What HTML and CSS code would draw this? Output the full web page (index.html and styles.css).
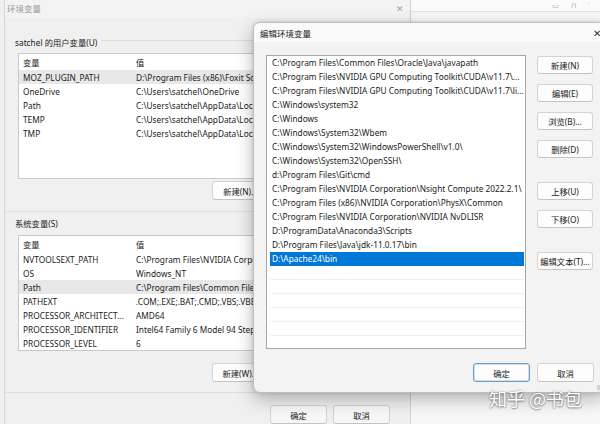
FILE: index.html
```html
<!DOCTYPE html>
<html>
<head>
<meta charset="utf-8">
<link rel="stylesheet" href="styles.css">
</head>
<body>
<div class="desk">
  <div class="backwin">
    <div class="bw-bar">
      <span class="bw-ico">▭</span><span class="bw-ico">⊓</span><span class="bw-ico">˅</span>
    </div>
  </div>

  <div class="envwin">
    <div class="ew-title"><span class="ew-name">环境变量</span><span class="ew-x">✕</span></div>

    <div class="sec sec1">
      <div class="grp-label"><span>satchel 的用户变量(U)</span><i class="grp-line"></i></div>
      <div class="vlist ulist">
        <div class="vrow vhdr"><span class="c1">变量</span><span class="c2">值</span></div>
        <div class="vrow sel"><span class="c1">MOZ_PLUGIN_PATH</span><span class="c2">D:\Program Files (x86)\Foxit Software\Foxit Reader\plugins\</span></div>
        <div class="vrow"><span class="c1">OneDrive</span><span class="c2">C:\Users\satchel\OneDrive</span></div>
        <div class="vrow"><span class="c1">Path</span><span class="c2">C:\Users\satchel\AppData\Local\Microsoft\WindowsApps;</span></div>
        <div class="vrow"><span class="c1">TEMP</span><span class="c2">C:\Users\satchel\AppData\Local\Temp</span></div>
        <div class="vrow"><span class="c1">TMP</span><span class="c2">C:\Users\satchel\AppData\Local\Temp</span></div>
      </div>
      <div class="btnrow btnrow1"><button class="btn">新建(N)...</button></div>
    </div>

    <div class="sec sec2">
      <div class="grp-label"><span>系统变量(S)</span></div>
      <div class="vlist slist">
        <div class="vrow vhdr"><span class="c1">变量</span><span class="c2">值</span></div>
        <div class="vrow"><span class="c1">NVTOOLSEXT_PATH</span><span class="c2">C:\Program Files\NVIDIA Corporation\NvToolsExt\</span></div>
        <div class="vrow"><span class="c1">OS</span><span class="c2">Windows_NT</span></div>
        <div class="vrow sel"><span class="c1">Path</span><span class="c2">C:\Program Files\Common Files\Oracle\Java\javapath;</span></div>
        <div class="vrow"><span class="c1">PATHEXT</span><span class="c2">.COM;.EXE;.BAT;.CMD;.VBS;.VBE;.JS;.JSE;.WSF;.WSH;.MSC</span></div>
        <div class="vrow"><span class="c1">PROCESSOR_ARCHITECT...</span><span class="c2">AMD64</span></div>
        <div class="vrow"><span class="c1">PROCESSOR_IDENTIFIER</span><span class="c2">Intel64 Family 6 Model 94 Stepping 3, GenuineIntel</span></div>
        <div class="vrow"><span class="c1">PROCESSOR_LEVEL</span><span class="c2">6</span></div>
      </div>
      <div class="btnrow btnrow2"><button class="btn">新建(W)...</button></div>
    </div>

    <div class="ew-foot"><button class="btn">确定</button><button class="btn">取消</button></div>
  </div>

  <div class="dlg">
    <div class="dlg-title"><span>编辑环境变量</span><span class="dlg-x">✕</span></div>
    <div class="dlg-body">
      <div class="plist">
        <div class="prow">C:\Program Files\Common Files\Oracle\Java\javapath</div>
        <div class="prow">C:\Program Files\NVIDIA GPU Computing Toolkit\CUDA\v11.7\...</div>
        <div class="prow">C:\Program Files\NVIDIA GPU Computing Toolkit\CUDA\v11.7\li...</div>
        <div class="prow">C:\Windows\system32</div>
        <div class="prow">C:\Windows</div>
        <div class="prow">C:\Windows\System32\Wbem</div>
        <div class="prow">C:\Windows\System32\WindowsPowerShell\v1.0\</div>
        <div class="prow">C:\Windows\System32\OpenSSH\</div>
        <div class="prow">d:\Program Files\Git\cmd</div>
        <div class="prow">C:\Program Files\NVIDIA Corporation\Nsight Compute 2022.2.1\</div>
        <div class="prow">C:\Program Files (x86)\NVIDIA Corporation\PhysX\Common</div>
        <div class="prow">C:\Program Files\NVIDIA Corporation\NVIDIA NvDLISR</div>
        <div class="prow">D:\ProgramData\Anaconda3\Scripts</div>
        <div class="prow">D:\Program Files\Java\jdk-11.0.17\bin</div>
        <div class="prow psel">D:\Apache24\bin</div>
        <div class="prow pempty"></div>
        <div class="prow pempty"></div>
        <div class="prow pempty"></div>
        <div class="prow pempty"></div>
        <div class="prow pempty"></div>
      </div>
      <div class="pbtns">
        <button class="btn pb">新建(N)</button>
        <button class="btn pb">编辑(E)</button>
        <button class="btn pb">浏览(B)...</button>
        <button class="btn pb">删除(D)</button>
        <button class="btn pb gap">上移(U)</button>
        <button class="btn pb">下移(O)</button>
        <button class="btn pb gap">编辑文本(T)...</button>
      </div>
    </div>
    <div class="dlg-foot"><button class="btn primary">确定</button><button class="btn">取消</button></div>
    <span class="grip"></span>
  </div>

  <div class="wm">知乎 @书包</div>
</div>
</body>
</html>
```

FILE: styles.css
```css
* { box-sizing: border-box; }
html, body { margin: 0; padding: 0; }
body {
  font-family: "Noto Sans", "Noto Sans CJK SC", sans-serif;
  font-size: 8.3px;
  color: #1b1b1b;
}
.desk {
  position: relative;
  width: 600px;
  height: 424px;
  overflow: hidden;
  background: #f0f0f0;
}

/* window behind on the right */
.backwin {
  position: absolute;
  left: 410px; top: 0; right: 0; bottom: 0;
  background: #f7f7f7;
}
.bw-bar {
  height: 12px;
  border-bottom: 1px solid #e2e2e2;
  background: #fbfbfb;
  display: flex;
  justify-content: flex-end;
  align-items: center;
  gap: 12px;
  padding-right: 10px;
  color: #a8a8a8;
  font-size: 7px;
  line-height: 1;
}

/* environment variables window */
.envwin {
  position: absolute;
  left: 4px; top: 0;
  width: 407px; height: 440px;
  background: #f0f0f0;
  border-left: 1px solid #d6d6d6;
  border-right: 1px solid #cfcfcf;
  display: flex;
  flex-direction: column;
}
.ew-title {
  height: 18px;
  display: flex;
  align-items: center;
  justify-content: space-between;
  padding: 0 6px 2px 2px;
  background: #f3f3f3;
  color: #9a9a9a;
}
.ew-name { font-size: 8.5px; }
.ew-x { font-size: 9px; color: #a0a0a0; }

.sec {
  padding-left: 10px;
  border-bottom: 1px solid #dedede;
  display: flex;
  flex-direction: column;
}
.sec1 { padding-top: 17px; padding-bottom: 11px; }
.sec2 { padding-top: 4px; padding-bottom: 10px; }
.grp-label {
  height: 14px;
  display: flex;
  align-items: center;
  gap: 4px;
  white-space: nowrap;
}
.grp-line {
  flex: 1;
  height: 0;
  border-top: 1px solid #dcdcdc;
  margin-top: -3px;
}
.vlist {
  margin-left: 3px;
  width: 236px;
  background: #fff;
  border: 1px solid #c9c9c9;
  border-right: 0;
  overflow: hidden;
}
.ulist { margin-top: 4px; height: 126px; }
.slist { margin-top: 5px; height: 116px; }
.vrow {
  height: 14px;
  display: flex;
  align-items: center;
  white-space: nowrap;
}
.vrow.vhdr { height: 16px; }
.vrow.sel { background: #e8e8e8; }
.c1 { width: 117px; padding-left: 4px; overflow: hidden; flex: none; }
.c2 { flex: 1; overflow: hidden; }

.btnrow {
  display: flex;
  gap: 7px;
  padding-left: 197px;
}
.btnrow1 { margin-top: 2px; }
.btnrow2 { margin-top: 12px; }

.btn {
  font: inherit;
  color: #1b1b1b;
  width: 57px;
  height: 19px;
  padding: 0;
  background: #fdfdfd;
  border: 1px solid #d3d3d3;
  border-bottom-color: #c4c4c4;
  border-radius: 3px;
  white-space: nowrap;
  flex: none;
}
.ew-foot {
  display: flex;
  gap: 6px;
  padding-left: 265px;
  margin-top: 12px;
}
.ew-foot .btn { background: #f7f7f7; }

/* edit dialog */
.dlg {
  position: absolute;
  left: 253px; top: 22px;
  width: 352px; height: 371px;
  background: #f3f3f3;
  border: 1px solid #bdbdbd;
  border-radius: 7px;
  box-shadow: 0 6px 18px rgba(0,0,0,0.28), 0 0 4px rgba(0,0,0,0.12);
  overflow: hidden;
}
.dlg-title {
  height: 19px;
  display: flex;
  align-items: center;
  justify-content: space-between;
  padding: 0 3px 0 6px;
  background: #fafafa;
  font-size: 8.5px;
}
.dlg-x { font-size: 10px; color: #333; }
.dlg-body {
  display: flex;
  padding: 13px 0 0 12px;
}
.plist {
  width: 260px;
  height: 294px;
  background: #fff;
  border: 1px solid #a9a9a9;
  padding: 0 1px 0 3px;
}
.prow {
  height: 14px;
  line-height: 14px;
  padding-left: 2px;
  white-space: nowrap;
  overflow: hidden;
}
.prow.psel { background: #0078d7; color: #fff; }
.prow.pempty { border-bottom: 1px solid #f1f1f1; }
.pbtns {
  margin-left: 11px;
  display: flex;
  flex-direction: column;
  gap: 10px;
  padding-top: 1px;
}
.pb { width: 56px; height: 18px; }
.pb.gap { margin-top: 14px; }
.dlg-foot {
  display: flex;
  justify-content: flex-end;
  gap: 7px;
  padding-right: 10px;
  margin-top: 14px;
}
.btn.primary {
  border: 1px solid #6d9cc6;
  box-shadow: inset 0 0 0 1px #cfe0ef;
}
.grip {
  position: absolute;
  right: 2px; bottom: 2px;
  width: 5px; height: 5px;
  background: radial-gradient(circle, #aaa 0.6px, transparent 0.8px) 0 0 / 2px 2px;
}

.wm {
  position: absolute;
  left: 489px; top: 385px;
  font-family: "Noto Sans CJK SC", sans-serif;
  font-size: 18px;
  color: #fff;
  white-space: nowrap;
  text-shadow: 0 0 2px rgba(0,0,0,0.45), 0 1px 2px rgba(0,0,0,0.35);
}
```
